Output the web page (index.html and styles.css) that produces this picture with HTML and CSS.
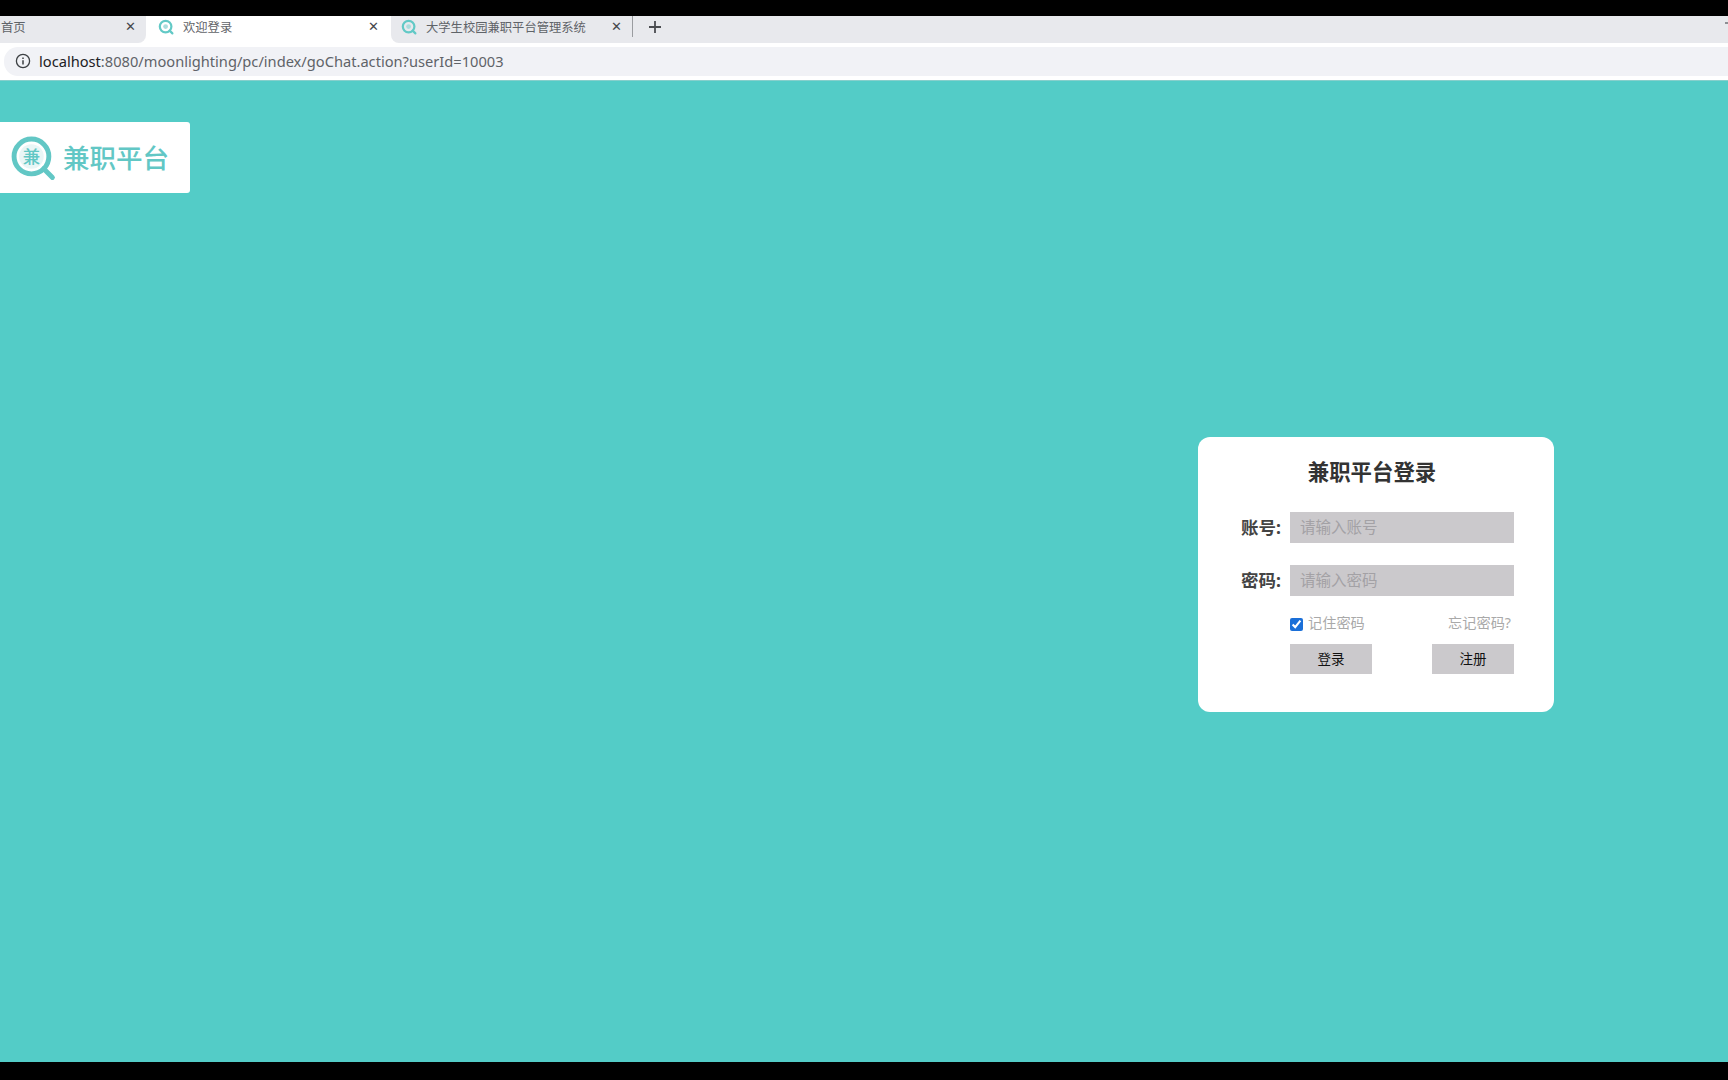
FILE: index.html
```html
<!DOCTYPE html>
<html lang="zh-CN">

<head>
    <meta charset="UTF-8">
    <title>欢迎登录</title>
    <link rel="stylesheet" href="styles.css">
</head>

<body>
    <div class="black-bar top"></div>

    <div class="tab-bar">
        <div class="tab-group">
            <div class="tab tab-first">
                <span class="tab-title">首页</span>
                <span class="tab-close">&#x2715;</span>
            </div>
            <div class="tab tab-active">
                <svg class="favicon" viewBox="0 0 16 16">
                    <circle cx="7.6" cy="7.6" r="5.8" fill="none" stroke="#62c9c6" stroke-width="2.2" />
                    <circle cx="7.6" cy="7.6" r="2.4" fill="#a9dcdc" />
                    <path d="M11.6 11.6l2.8 2.8" stroke="#62c9c6" stroke-width="2.2" stroke-linecap="round" />
                </svg>
                <span class="tab-title">欢迎登录</span>
                <span class="tab-close">&#x2715;</span>
            </div>
            <div class="tab tab-last">
                <svg class="favicon" viewBox="0 0 16 16">
                    <circle cx="7.6" cy="7.6" r="5.8" fill="none" stroke="#62c9c6" stroke-width="2.2" />
                    <circle cx="7.6" cy="7.6" r="2.4" fill="#a9dcdc" />
                    <path d="M11.6 11.6l2.8 2.8" stroke="#62c9c6" stroke-width="2.2" stroke-linecap="round" />
                </svg>
                <span class="tab-title">大学生校园兼职平台管理系统</span>
                <span class="tab-close">&#x2715;</span>
            </div>
        </div>
        <div class="tab-sep"></div>
        <svg class="new-tab" viewBox="0 0 14 14">
            <path d="M7 1v12M1 7h12" stroke="#4a4c50" stroke-width="1.8" />
        </svg>
        <div class="tab-list"></div>
    </div>

    <div class="toolbar">
        <div class="address">
            <svg class="info-icon" viewBox="0 0 16 16">
                <circle cx="8" cy="8" r="6.6" fill="none" stroke="#3c4043" stroke-width="1.3" />
                <path d="M8 7.2v4.4M8 4.4v1.6" stroke="#3c4043" stroke-width="1.5" />
            </svg>
            <span class="url"><span class="host">localhost</span>:8080/moonlighting/pc/index/goChat.action?userId=10003</span>
        </div>
    </div>

    <main class="page">
        <div class="logo">
            <svg class="logo-icon" viewBox="0 0 44 44">
                <circle cx="20" cy="20" r="17" fill="none" stroke="#62c7c5" stroke-width="4.8" />
                <circle cx="20" cy="20" r="12" fill="#e9f6f6" />
                <text x="20" y="26" text-anchor="middle" class="logo-icon-text">兼</text>
                <path d="M32 32l8.5 8.5" stroke="#62c7c5" stroke-width="4.8" stroke-linecap="round" />
            </svg>
            <span class="logo-text">兼职平台</span>
        </div>

        <form class="login-card">
            <h2 class="login-title">兼职平台登录</h2>
            <div class="form-row">
                <label class="form-label" for="account">账号:</label>
                <input class="form-input" id="account" type="text" placeholder="请输入账号">
            </div>
            <div class="form-row">
                <label class="form-label" for="password">密码:</label>
                <input class="form-input" id="password" type="password" placeholder="请输入密码">
            </div>
            <div class="form-options">
                <label class="remember"><input type="checkbox" checked>记住密码</label>
                <a class="forgot">忘记密码?</a>
            </div>
            <div class="form-buttons">
                <button class="form-btn" type="button">登录</button>
                <button class="form-btn" type="button">注册</button>
            </div>
        </form>
    </main>

    <div class="black-bar bottom"></div>
</body>

</html>
```

FILE: styles.css
```css
* {
    box-sizing: border-box;
}

html,
body {
    height: 100%;
}

body {
    margin: 0;
    display: flex;
    flex-direction: column;
    overflow: hidden;
    background: #fff;
    font-family: "Noto Sans", "Noto Sans CJK SC", sans-serif;
}

.black-bar {
    background: #000;
    flex: none;
}

.black-bar.top {
    height: 16px;
}

.black-bar.bottom {
    height: 18px;
}

/* browser tabs */
.tab-bar {
    flex: none;
    height: 27px;
    display: flex;
    align-items: center;
    background: #e8e9ed;
}

.tab-group {
    height: 100%;
    display: flex;
    background: #fff;
}

.tab {
    height: 100%;
    display: flex;
    align-items: center;
    font-size: 12.3px;
    color: #5f6368;
    background: #e8e9ed;
}

.tab-first {
    width: 146px;
    padding: 0 10px 6px 1px;
    border-radius: 0 0 8px 0;
}

.tab-active {
    width: 245px;
    padding: 0 12px 6px 12px;
    background: #fff;
}

.tab-last {
    width: 241px;
    padding: 0 10px 6px 10px;
    border-radius: 0 0 0 8px;
}

.favicon {
    width: 16px;
    height: 16px;
    margin-right: 9px;
    flex: none;
}

.tab-title {
    flex: 1;
    white-space: nowrap;
}

.tab-close {
    font-size: 13px;
    color: #45474b;
    line-height: 1;
    font-family: "DejaVu Sans", sans-serif;
}

.tab-sep {
    width: 1px;
    height: 21px;
    align-self: flex-start;
    background: #9a9ca0;
}

.new-tab {
    width: 14px;
    height: 14px;
    margin: 0 0 6px 15px;
}

.tab-list {
    width: 3px;
    height: 2px;
    margin: 0 0 14px auto;
    background: #8d8f93;
}

/* address bar */
.toolbar {
    flex: none;
    height: 38px;
    padding: 4px 0 0 4px;
    background: #fff;
    border-bottom: 1px solid #86cfcc;
}

.address {
    height: 29px;
    display: flex;
    align-items: center;
    padding: 0 0 2px 11px;
    background: #f1f2f6;
    border-radius: 14px 0 0 14px;
}

.info-icon {
    width: 16px;
    height: 16px;
    margin-right: 8px;
}

.url {
    font-size: 14.65px;
    color: #5f6368;
    white-space: nowrap;
}

.host {
    color: #202124;
}

/* page */
.page {
    flex: 1;
    display: flex;
    justify-content: space-between;
    align-items: flex-start;
    padding-right: 174px;
    background: #53ccc7;
}

.logo {
    width: 190px;
    height: 71px;
    margin-top: 41px;
    padding-left: 11px;
    display: flex;
    align-items: center;
    background: #fff;
    border-radius: 0 3px 3px 0;
}

.logo-icon {
    width: 45px;
    height: 45px;
    margin-right: 7px;
    margin-top: 1px;
}

.logo-icon-text {
    font-size: 17px;
    font-weight: 500;
    fill: #62c7c5;
}

.logo-text {
    margin-top: -2px;
    font-size: 26.5px;
    font-weight: 500;
    color: #62c7c5;
    white-space: nowrap;
}

.login-card {
    width: 356px;
    height: 275px;
    margin-top: 356px;
    padding: 20px 40px 0 0;
    background: #fff;
    border-radius: 12px;
}

.login-title {
    margin: 0 0 25px;
    padding-left: 32px;
    text-align: center;
    font-size: 21.4px;
    line-height: 30px;
    font-weight: 700;
    color: #333;
}

.form-row {
    display: flex;
    align-items: center;
    justify-content: flex-end;
    height: 31px;
    margin-bottom: 22px;
}

.form-label {
    margin: -2px 9px 0 0;
    font-size: 17.5px;
    font-weight: 700;
    color: #444;
}

.form-input {
    width: 224px;
    height: 31px;
    padding: 0 10px 2px;
    border: 0;
    background: #cbc9cc;
    font-family: inherit;
    font-size: 15.5px;
}

.form-input::placeholder {
    color: #a3a1a5;
}

.form-options {
    margin-left: 92px;
    margin-top: -8px;
    height: 24px;
    display: flex;
    justify-content: space-between;
    align-items: center;
    padding-right: 3px;
    font-size: 14.2px;
    color: #a9a9a9;
}

.remember {
    display: flex;
    align-items: center;
}

.remember input {
    width: 13px;
    height: 13px;
    margin: 5px 5px 0 0;
    accent-color: #1a6fd8;
}

.form-buttons {
    margin-left: 92px;
    margin-top: 10px;
    display: flex;
    justify-content: space-between;
}

.form-btn {
    width: 82px;
    height: 30px;
    padding: 0 0 3px;
    border: 0;
    background: #cbc9cc;
    font-family: inherit;
    font-size: 13.5px;
    color: #111;
}
```
